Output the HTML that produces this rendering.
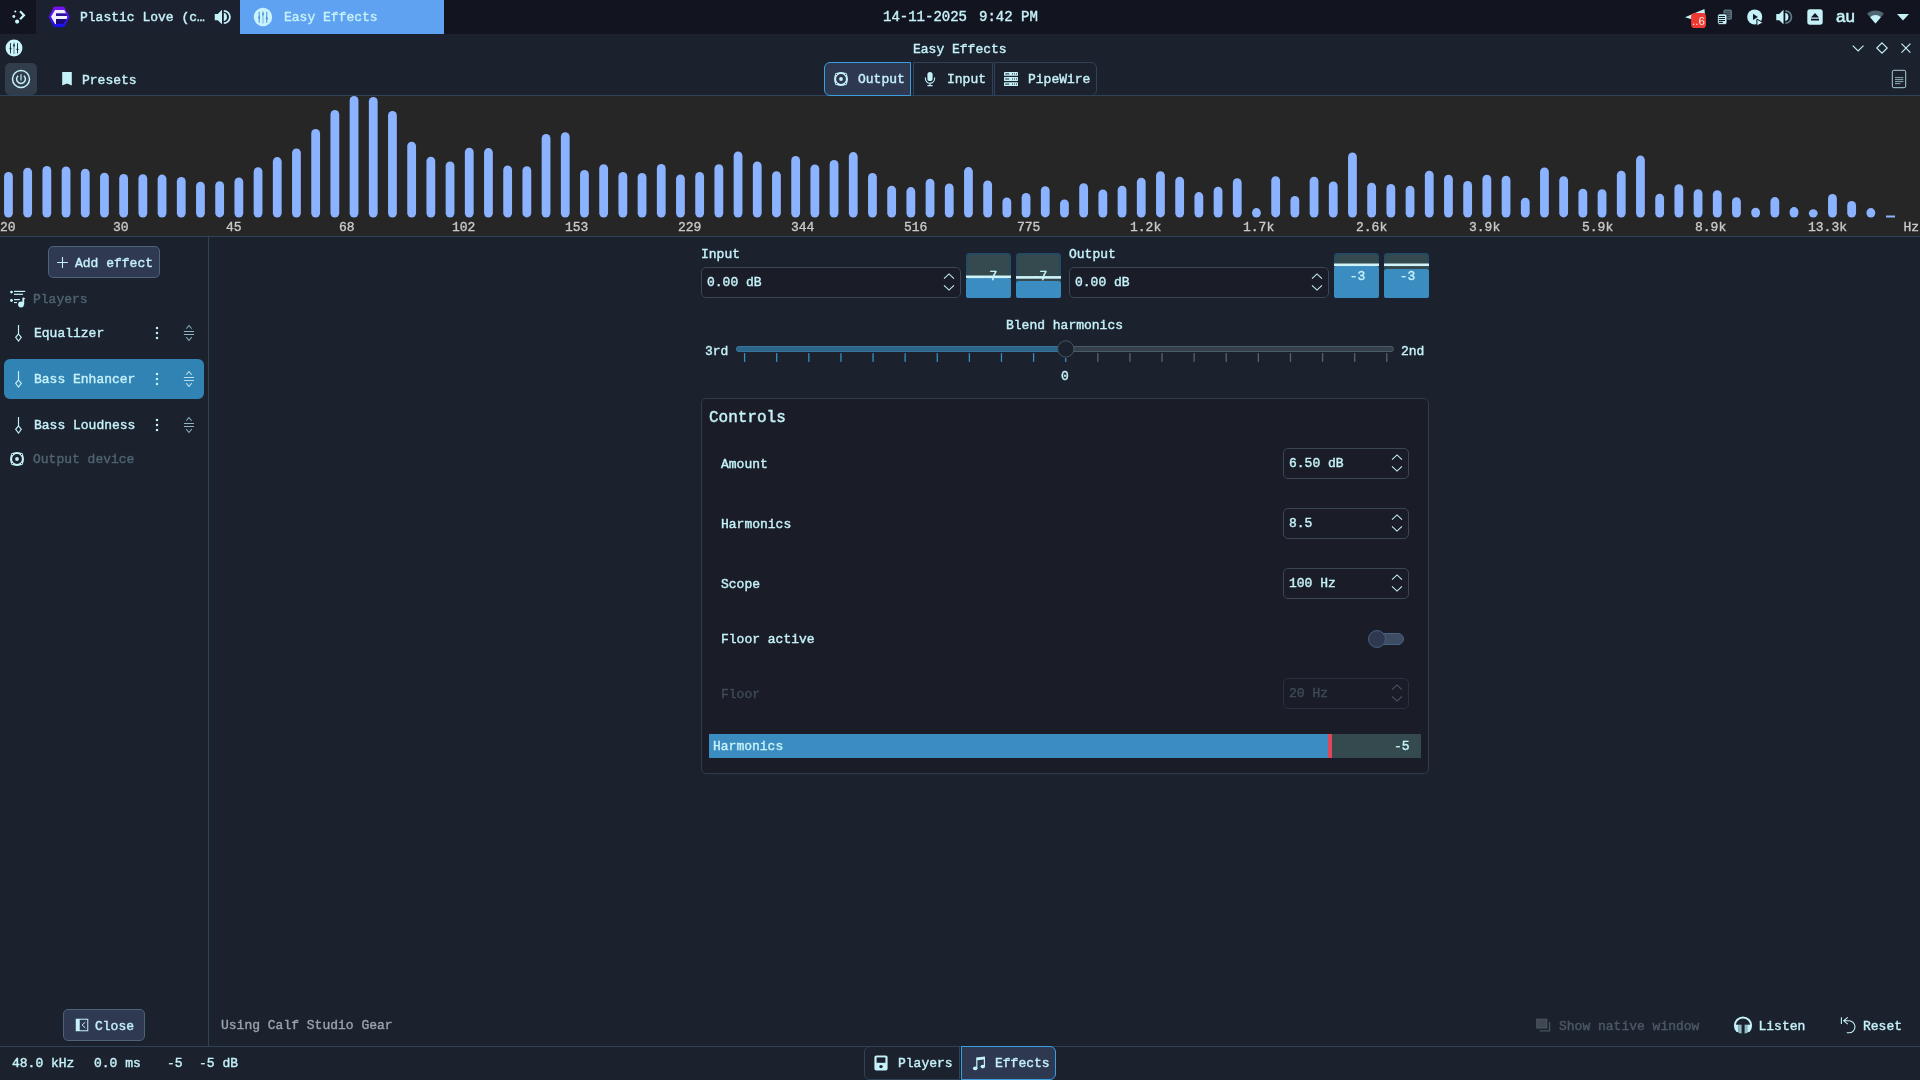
<!DOCTYPE html>
<html lang="en">
<head>
<meta charset="utf-8">
<title>Easy Effects</title>
<style>
*{box-sizing:border-box;margin:0;padding:0}
html,body{width:1920px;height:1080px;overflow:hidden;background:#1b212d}
body{position:relative;font-family:"Liberation Mono","DejaVu Sans Mono",monospace;font-size:13px;line-height:16px;color:#c5f1f9;-webkit-text-stroke:0.4px currentColor;white-space:nowrap}
.abs,.t,.fl,.tk,i,svg{position:absolute}
.t{line-height:16px;height:16px}
.dim{color:#4e6470}
/* top panel */
#panel{left:0;top:0;width:1920px;height:34px;background:#12141f}
#tasks{left:36px;top:0;width:204px;height:34px;background:#1b212e}
#acttab{left:240px;top:0;width:204px;height:34px;background:#60a2f2}
/* lines */
.hl{height:1px;background:#2f4358;left:0;width:1920px}
.vl{width:1px;background:#2f4358}
#spec{left:0;top:96px;width:1920px;height:140px;background:#262626}
.fl{top:220px;font-size:13px;line-height:16px;color:#c9c9c9;-webkit-text-stroke:0.35px #c9c9c9}
.btn{background:#2f3a52;border:1px solid #4c6378;border-radius:5px}
.spin{background:#1a1d28;border:1px solid #3a4754;border-radius:5px}
.tk{top:353px;width:1.4px;height:9px;background:#56646f}
.tk.on{background:#3a8cc4}
.tk.sh{top:358px;height:4px}
</style>
</head>
<body>
<div id="root" class="abs" style="left:0;top:0;width:1920px;height:1080px;will-change:transform;transform:translateZ(0)">
<!-- ===== desktop panel ===== -->
<div id="panel" class="abs"></div>
<div id="tasks" class="abs"></div>
<div id="acttab" class="abs"></div>
<span class="t" style="left:80px;top:10px">Plastic Love (c…</span>
<span class="t" style="left:284px;top:10px">Easy Effects</span>
<span class="t" style="left:883px;top:9px;font-size:14px">14-11-2025</span>
<span class="t" style="left:979px;top:9px;font-size:14px">9:42 PM</span>


<!-- launcher (plasma-like) -->
<svg width="20" height="20" viewBox="9 7 20 20" style="left:9px;top:7px" fill="#c9f5fb">
<circle cx="15.3" cy="11.5" r="1.05"/><circle cx="13.85" cy="16.5" r="1.45"/><circle cx="17.1" cy="21.6" r="2.05"/>
<path d="M19.3 12.1L20.8 10.6L25.5 15.35L20.8 20.1L19.3 18.6L22.4 15.35Z"/>
</svg>
<!-- player app icon (hexagon) -->
<svg width="24" height="24" viewBox="47 5 24 24" style="left:47px;top:5px">
<defs><linearGradient id="hx" x1="0" y1="0" x2="0" y2="1"><stop offset="0" stop-color="#7c12f2"/><stop offset=".55" stop-color="#4a12f2"/><stop offset="1" stop-color="#1612f8"/></linearGradient></defs>
<path d="M54.2 7.1H63.9L69.4 16.9L63.9 26.75H54.2L49 16.9Z" fill="url(#hx)" stroke="url(#hx)" stroke-width=".8" stroke-linejoin="round"/>
<path d="M56 13.2H65.6L67 16.05H56Z" fill="#2a109a"/><path d="M56 18.9H66.6L63.2 23.9H56Z" fill="#1e0a7a"/>
<path d="M51 16.7L55.1 10.1H64.3L66 13.2H56V16.05H67.2L66.8 18.9H56V23.9H55.1Z" fill="#f0eefc"/>
</svg>
<!-- volume in task -->
<svg width="20" height="18" viewBox="213 8 20 18" style="left:213px;top:8px" fill="#c5f1f9">
<path d="M214.75 13.9H217.7L222 9.8V24.2L217.7 20.2H214.75Z"/>
<path d="M223.8 12.85A4.3 4.3 0 0 1 223.8 21.15Z"/>
<path d="M223.8 10.9A6.1 6.1 0 0 1 223.8 23.1" fill="none" stroke="#c5f1f9" stroke-width="1.8"/>
</svg>
<!-- easy effects icon in active tab -->
<svg width="22" height="22" viewBox="252 6 22 22" style="left:252px;top:6px">
<circle cx="263" cy="17" r="9.2" fill="#c9f4fb"/>
<g stroke="#4f8fe0" stroke-width="1"><path d="M259.2 11.8V22.8M266.8 11.8V22.8"/><path d="M263 11.2V23.4" stroke="#7fb4ee" stroke-width="1.1"/></g>
<g fill="#4f8fe0"><path d="M259.2 15.4L260.2 17.6L259.2 19.8L258.2 17.6Z"/><path d="M263 12L264 14.1L263 16.2L262 14.1Z"/><path d="M266.8 16.1L267.8 18.3L266.8 20.5L265.8 18.3Z"/></g>
</svg>
<!-- tray: telegram + badge -->
<svg width="26" height="24" viewBox="1683 6 26 24" style="left:1683px;top:6px">
<path d="M1685 17.2L1704.4 8.9L1704.9 13L1700 22L1694 20Z" fill="#c5f1f9"/>
<rect x="1691.1" y="12.9" width="14.9" height="15.1" rx="3.6" fill="#ee3a32"/>
</svg>
<span class="t" style="left:1692px;top:13px;font-family:'Liberation Sans','DejaVu Sans',sans-serif;font-size:11.5px;color:#ffe9e6;-webkit-text-stroke:0">..6</span>
<!-- tray: clipboard -->
<svg width="16" height="16" viewBox="0 0 16 16" style="left:1717px;top:9px">
<rect x="6.4" y="0.5" width="8.6" height="10.3" rx="1.8" fill="#5a6f7d"/>
<g stroke="#2b3540" stroke-width=".9"><path d="M8 2.8h5.4M8 4.7h5.4M8 6.6h5.4M11 8.5h2.4"/></g>
<rect x=".7" y="4.95" width="9.2" height="10.5" rx="1.8" fill="#c5f1f9" stroke="#12141f" stroke-width=".7"/>
<g stroke="#12141f" stroke-width="1.1"><path d="M1.9 7.5h6.1M1.9 9.5h6.1M1.9 11.5h6.1M1.9 13.4h4"/></g>
</svg>
<!-- tray: media -->
<svg width="19" height="19" viewBox="-0.5 -0.5 19 19" style="left:1746px;top:8px">
<circle cx="8.2" cy="8.4" r="7.5" fill="#c5f1f9"/>
<path d="M6.5 5.3L11.4 8.45L6.5 11.6Z" fill="#12141f"/>
<path d="M10.4 10.6 L16.6 14.2 L10.4 17.4Z" fill="#c5f1f9" stroke="#12141f" stroke-width="1"/>
</svg>
<!-- tray: volume -->
<svg width="21" height="18" viewBox="1774 8 21 18" style="left:1774px;top:8px" fill="#c5f1f9">
<path d="M1776.25 13.9H1779.2L1783.5 9.8V24.2L1779.2 20.2H1776.25Z"/>
<path d="M1785.3 12.85A4.3 4.3 0 0 1 1785.3 21.15Z"/>
<path d="M1785.3 10.9A6.1 6.1 0 0 1 1785.3 23.1" fill="none" stroke="#5d7886" stroke-width="1.8"/>
</svg>
<!-- tray: eject -->
<svg width="16" height="16" viewBox="0 0 16 16" style="left:1807px;top:9px">
<rect x=".3" y=".3" width="15.4" height="15.4" rx="2.6" fill="#c5f1f9"/>
<path d="M8 3.9 L12 8.4 H4Z M4 9.8 H12 V11.6 H4Z" fill="#12141f"/>
</svg>
<span class="t" style="left:1836px;top:7px;font-family:'Liberation Sans','DejaVu Sans',sans-serif;font-size:17px;line-height:20px;height:20px;-webkit-text-stroke:0.55px #c5f1f9">au</span>
<!-- tray: wifi -->
<svg width="19" height="14" viewBox="-0.5 0 19 14" style="left:1866px;top:10px">
<path d="M9 13.4 L0.6 3.8 A12.6 12.6 0 0 1 17.4 3.8Z" fill="#4f6674"/>
<path d="M9 13.4 L3.6 7.2 A8 8 0 0 1 14.4 7.2Z" fill="#c5f1f9"/>
</svg>
<svg width="14" height="8" viewBox="0 0 14 8" style="left:1896px;top:13px"><path d="M1 1 H13 L7 7.4Z" fill="#c5f1f9"/></svg>

<!-- ===== window ===== -->
<span class="t" style="left:913px;top:42px">Easy Effects</span>

<div class="abs hl" style="top:95px"></div>
<!-- window icon -->
<svg width="20" height="20" viewBox="4 38 20 20" style="left:4px;top:38px">
<circle cx="14" cy="48" r="8.45" fill="#c9f4fb"/>
<g stroke="#1b212d" stroke-width=".9"><path d="M10.5 43.2V53.4M17.5 43.2V53.4"/><path d="M14 42.6V54" stroke="#5f7c88" stroke-width="1"/></g>
<g fill="#1b212d"><path d="M10.5 46.6L11.4 48.6L10.5 50.6L9.6 48.6Z"/><path d="M14 43.4L14.9 45.3L14 47.2L13.1 45.3Z"/><path d="M17.5 47.2L18.4 49.2L17.5 51.2L16.6 49.2Z"/></g>
</svg>
<!-- window controls -->
<svg width="14" height="8" viewBox="1851 44 14 8" style="left:1851px;top:44px"><path d="M1852.7 45.7L1858.1 51L1863.5 45.7" fill="none" stroke="#c5f1f9" stroke-width="1.15"/></svg>
<svg width="14" height="14" viewBox="1875 41 14 14" style="left:1875px;top:41px"><path d="M1882 42.8L1887.2 48L1882 53.2L1876.8 48Z" fill="none" stroke="#c5f1f9" stroke-width="1.15"/></svg>
<svg width="12" height="12" viewBox="1900 42 12 12" style="left:1900px;top:42px"><path d="M1901.5 43.6L1910.4 52.6M1910.4 43.6L1901.5 52.6" fill="none" stroke="#c5f1f9" stroke-width="1.15"/></svg>
<!-- power button -->
<div class="abs" style="left:5px;top:63px;width:32px;height:32px;background:#313d4b;border-radius:5px"></div>
<svg width="22" height="22" viewBox="10 68 22 22" style="left:10px;top:68px" fill="none" stroke="#c5f1f9">
<circle cx="21" cy="79" r="8.5" stroke-width="1.5"/>
<path d="M18.1 75.7A4.4 4.4 0 1 0 23.9 75.7" stroke-width="1.5"/><path d="M21 74.2V80.6" stroke-width="1.5" stroke="#9cc7d1"/>
</svg>
<!-- presets -->
<svg width="12" height="16" viewBox="0 0 12 16" style="left:61px;top:71px"><path d="M1.2 1 H10.8 V14.6 L6 12.4 L1.2 14.6Z" fill="#c5f1f9"/></svg>
<span class="t" style="left:82px;top:73px">Presets</span>
<!-- tabs -->
<div class="abs" style="left:824px;top:62px;width:87px;height:34px;background:#2e3850;border:1px solid #3b9ede;border-radius:6px 0 0 6px"></div>
<div class="abs" style="left:913px;top:62px;width:79.5px;height:34px;border:1px solid #30425a"></div>
<div class="abs" style="left:994px;top:62px;width:103px;height:34px;border:1px solid #30425a;border-radius:0 6px 6px 0"></div>
<svg width="16" height="16" viewBox="0 0 16 16" style="left:833px;top:71px">
<rect x="1.8" y="1.8" width="12.4" height="12.4" rx="2.2" fill="#c5f1f9"/><circle cx="8" cy="8" r="7" fill="#c5f1f9"/><circle cx="8" cy="8" r="4.9" fill="#2e3850"/><circle cx="8" cy="8" r="1.9" fill="#c5f1f9"/>
<g fill="#2e3850"><circle cx="3.4" cy="3.4" r=".6"/><circle cx="12.6" cy="3.4" r=".6"/><circle cx="3.4" cy="12.6" r=".6"/><circle cx="12.6" cy="12.6" r=".6"/></g>
</svg>
<span class="t" style="left:858px;top:72px">Output</span>
<svg width="12" height="16" viewBox="0 0 12 16" style="left:924px;top:71px">
<rect x="3.4" y="1" width="5.2" height="9" rx="2.6" fill="#c5f1f9"/>
<path d="M1.4 6.6 V7.6 A4.6 4.6 0 0 0 10.6 7.6 V6.6 M6 12.4 V14.4 M3.4 14.6 H8.6" fill="none" stroke="#c5f1f9" stroke-width="1.1"/>
</svg>
<span class="t" style="left:947px;top:72px">Input</span>
<svg width="16" height="16" viewBox="0 0 16 16" style="left:1003px;top:71px" fill="#c5f1f9">
<rect x="1" y="1" width="14" height="3.8" rx=".6"/><rect x="1" y="6.1" width="14" height="3.8" rx=".6"/><rect x="1" y="11.2" width="14" height="3.8" rx=".6"/>
<g fill="#1b212d"><rect x="2.2" y="2.4" width="4" height="1"/><rect x="2.2" y="7.5" width="4" height="1"/><rect x="2.2" y="12.6" width="4" height="1"/>
<rect x="9" y="2.4" width="1" height="1"/><rect x="11" y="2.4" width="1" height="1"/><rect x="13" y="2.4" width="1" height="1"/>
<rect x="9" y="7.5" width="1" height="1"/><rect x="11" y="7.5" width="1" height="1"/><rect x="13" y="7.5" width="1" height="1"/>
<rect x="9" y="12.6" width="1" height="1"/><rect x="11" y="12.6" width="1" height="1"/><rect x="13" y="12.6" width="1" height="1"/></g>
</svg>
<span class="t" style="left:1028px;top:72px">PipeWire</span>
<!-- menu icon -->
<svg width="16" height="20" viewBox="0 0 16 20" style="left:1891px;top:69px" fill="none" stroke="#a9cfd8">
<rect x="1.3" y="1.3" width="13.4" height="17.4" rx="1.6" stroke-width="1"/>
<path d="M4 8.6h8.4M4 10.6h8.4M4 12.6h8.4M4 14.6h5.4" stroke-width=".8"/>
</svg>

<div id="spec" class="abs"></div>
<svg width="1920" height="140" viewBox="0 96 1920 140" style="left:0;top:96px" fill="#8bb3ff">
<rect x="4.05" y="171.9" width="8.8" height="45.6" rx="4.4"/>
<rect x="23.25" y="167.7" width="8.8" height="49.8" rx="4.4"/>
<rect x="42.45" y="166.0" width="8.8" height="51.5" rx="4.4"/>
<rect x="61.65" y="166.5" width="8.8" height="51.0" rx="4.4"/>
<rect x="80.85" y="168.8" width="8.8" height="48.8" rx="4.4"/>
<rect x="100.05" y="172.7" width="8.8" height="44.8" rx="4.4"/>
<rect x="119.25" y="174.0" width="8.8" height="43.5" rx="4.4"/>
<rect x="138.45" y="174.2" width="8.8" height="43.3" rx="4.4"/>
<rect x="157.65" y="174.6" width="8.8" height="42.9" rx="4.4"/>
<rect x="176.85" y="176.9" width="8.8" height="40.6" rx="4.4"/>
<rect x="196.05" y="181.7" width="8.8" height="35.8" rx="4.4"/>
<rect x="215.25" y="181.2" width="8.8" height="36.2" rx="4.4"/>
<rect x="234.45" y="177.5" width="8.8" height="40.0" rx="4.4"/>
<rect x="253.65" y="167.3" width="8.8" height="50.2" rx="4.4"/>
<rect x="272.85" y="157.1" width="8.8" height="60.4" rx="4.4"/>
<rect x="292.05" y="148.5" width="8.8" height="69.0" rx="4.4"/>
<rect x="311.25" y="129.0" width="8.8" height="88.5" rx="4.4"/>
<rect x="330.45" y="110.0" width="8.8" height="107.5" rx="4.4"/>
<rect x="349.65" y="96.0" width="8.8" height="121.5" rx="4.4"/>
<rect x="368.85" y="96.9" width="8.8" height="120.6" rx="4.4"/>
<rect x="388.05" y="111.0" width="8.8" height="106.5" rx="4.4"/>
<rect x="407.25" y="141.7" width="8.8" height="75.8" rx="4.4"/>
<rect x="426.45" y="156.7" width="8.8" height="60.8" rx="4.4"/>
<rect x="445.65" y="161.5" width="8.8" height="56.0" rx="4.4"/>
<rect x="464.85" y="147.7" width="8.8" height="69.8" rx="4.4"/>
<rect x="484.05" y="148.1" width="8.8" height="69.4" rx="4.4"/>
<rect x="503.25" y="165.4" width="8.8" height="52.1" rx="4.4"/>
<rect x="522.45" y="166.2" width="8.8" height="51.2" rx="4.4"/>
<rect x="541.65" y="134.0" width="8.8" height="83.5" rx="4.4"/>
<rect x="560.85" y="132.3" width="8.8" height="85.2" rx="4.4"/>
<rect x="580.05" y="170.0" width="8.8" height="47.5" rx="4.4"/>
<rect x="599.25" y="164.2" width="8.8" height="53.3" rx="4.4"/>
<rect x="618.45" y="171.9" width="8.8" height="45.6" rx="4.4"/>
<rect x="637.65" y="172.9" width="8.8" height="44.6" rx="4.4"/>
<rect x="656.85" y="164.0" width="8.8" height="53.5" rx="4.4"/>
<rect x="676.05" y="174.4" width="8.8" height="43.1" rx="4.4"/>
<rect x="695.25" y="171.9" width="8.8" height="45.6" rx="4.4"/>
<rect x="714.45" y="164.2" width="8.8" height="53.3" rx="4.4"/>
<rect x="733.65" y="151.5" width="8.8" height="66.0" rx="4.4"/>
<rect x="752.85" y="161.5" width="8.8" height="56.0" rx="4.4"/>
<rect x="772.05" y="171.2" width="8.8" height="46.2" rx="4.4"/>
<rect x="791.25" y="156.0" width="8.8" height="61.5" rx="4.4"/>
<rect x="810.45" y="164.4" width="8.8" height="53.1" rx="4.4"/>
<rect x="829.65" y="160.0" width="8.8" height="57.5" rx="4.4"/>
<rect x="848.85" y="152.1" width="8.8" height="65.4" rx="4.4"/>
<rect x="868.05" y="172.9" width="8.8" height="44.6" rx="4.4"/>
<rect x="887.25" y="185.8" width="8.8" height="31.7" rx="4.4"/>
<rect x="906.45" y="187.1" width="8.8" height="30.4" rx="4.4"/>
<rect x="925.65" y="178.8" width="8.8" height="38.8" rx="4.4"/>
<rect x="944.85" y="183.5" width="8.8" height="34.0" rx="4.4"/>
<rect x="964.05" y="167.1" width="8.8" height="50.4" rx="4.4"/>
<rect x="983.25" y="180.4" width="8.8" height="37.1" rx="4.4"/>
<rect x="1002.45" y="197.5" width="8.8" height="20.0" rx="4.4"/>
<rect x="1021.65" y="192.9" width="8.8" height="24.6" rx="4.4"/>
<rect x="1040.85" y="186.2" width="8.8" height="31.2" rx="4.4"/>
<rect x="1060.05" y="199.4" width="8.8" height="18.1" rx="4.4"/>
<rect x="1079.25" y="183.3" width="8.8" height="34.2" rx="4.4"/>
<rect x="1098.45" y="189.4" width="8.8" height="28.1" rx="4.4"/>
<rect x="1117.65" y="185.8" width="8.8" height="31.7" rx="4.4"/>
<rect x="1136.85" y="177.7" width="8.8" height="39.8" rx="4.4"/>
<rect x="1156.05" y="171.2" width="8.8" height="46.2" rx="4.4"/>
<rect x="1175.25" y="176.7" width="8.8" height="40.8" rx="4.4"/>
<rect x="1194.45" y="192.1" width="8.8" height="25.4" rx="4.4"/>
<rect x="1213.65" y="186.7" width="8.8" height="30.8" rx="4.4"/>
<rect x="1232.85" y="178.3" width="8.8" height="39.2" rx="4.4"/>
<rect x="1252.05" y="208.1" width="8.8" height="9.4" rx="4.4"/>
<rect x="1271.25" y="176.2" width="8.8" height="41.2" rx="4.4"/>
<rect x="1290.45" y="196.0" width="8.8" height="21.5" rx="4.4"/>
<rect x="1309.65" y="176.7" width="8.8" height="40.8" rx="4.4"/>
<rect x="1328.85" y="181.5" width="8.8" height="36.0" rx="4.4"/>
<rect x="1348.05" y="152.5" width="8.8" height="65.0" rx="4.4"/>
<rect x="1367.25" y="182.7" width="8.8" height="34.8" rx="4.4"/>
<rect x="1386.45" y="184.0" width="8.8" height="33.5" rx="4.4"/>
<rect x="1405.65" y="185.8" width="8.8" height="31.7" rx="4.4"/>
<rect x="1424.85" y="170.8" width="8.8" height="46.7" rx="4.4"/>
<rect x="1444.05" y="174.8" width="8.8" height="42.7" rx="4.4"/>
<rect x="1463.25" y="181.0" width="8.8" height="36.5" rx="4.4"/>
<rect x="1482.45" y="174.8" width="8.8" height="42.7" rx="4.4"/>
<rect x="1501.65" y="175.8" width="8.8" height="41.7" rx="4.4"/>
<rect x="1520.85" y="197.7" width="8.8" height="19.8" rx="4.4"/>
<rect x="1540.05" y="167.5" width="8.8" height="50.0" rx="4.4"/>
<rect x="1559.25" y="176.2" width="8.8" height="41.2" rx="4.4"/>
<rect x="1578.45" y="188.8" width="8.8" height="28.8" rx="4.4"/>
<rect x="1597.65" y="189.2" width="8.8" height="28.3" rx="4.4"/>
<rect x="1616.85" y="170.8" width="8.8" height="46.7" rx="4.4"/>
<rect x="1636.05" y="155.6" width="8.8" height="61.9" rx="4.4"/>
<rect x="1655.25" y="193.8" width="8.8" height="23.8" rx="4.4"/>
<rect x="1674.45" y="184.2" width="8.8" height="33.3" rx="4.4"/>
<rect x="1693.65" y="189.2" width="8.8" height="28.3" rx="4.4"/>
<rect x="1712.85" y="190.2" width="8.8" height="27.3" rx="4.4"/>
<rect x="1732.05" y="197.3" width="8.8" height="20.2" rx="4.4"/>
<rect x="1751.25" y="207.7" width="8.8" height="9.8" rx="4.4"/>
<rect x="1770.45" y="197.1" width="8.8" height="20.4" rx="4.4"/>
<rect x="1789.65" y="207.1" width="8.8" height="10.4" rx="4.4"/>
<rect x="1808.85" y="209.2" width="8.8" height="8.3" rx="4.4"/>
<rect x="1828.05" y="194.0" width="8.8" height="23.5" rx="4.4"/>
<rect x="1847.25" y="201.0" width="8.8" height="16.5" rx="4.4"/>
<rect x="1866.45" y="208.1" width="8.8" height="9.4" rx="4.4"/>
<rect x="1886" y="215.5" width="9" height="2"/>
</svg>
<span class="fl" style="left:0px">20</span><span class="fl" style="left:113px">30</span><span class="fl" style="left:226px">45</span><span class="fl" style="left:339px">68</span><span class="fl" style="left:452px">102</span><span class="fl" style="left:565px">153</span><span class="fl" style="left:678px">229</span><span class="fl" style="left:791px">344</span><span class="fl" style="left:904px">516</span><span class="fl" style="left:1017px">775</span><span class="fl" style="left:1130px">1.2k</span><span class="fl" style="left:1243px">1.7k</span><span class="fl" style="left:1356px">2.6k</span><span class="fl" style="left:1469px">3.9k</span><span class="fl" style="left:1582px">5.9k</span><span class="fl" style="left:1695px">8.9k</span><span class="fl" style="left:1808px">13.3k</span><span class="fl" style="right:1px">Hz</span>
<div class="abs hl" style="top:236px"></div>
<div class="abs vl" style="left:208px;top:237px;height:809px"></div>
<div class="abs hl" style="top:1046px"></div>


<!-- ===== sidebar ===== -->
<div class="abs btn" style="left:48px;top:246px;width:112px;height:32px"></div>
<svg width="13" height="13" viewBox="-0.5 -0.5 13 13" style="left:56px;top:256px"><path d="M6 .6V11.4M.6 6H11.4" stroke="#c5f1f9" stroke-width="1.1" fill="none"/></svg>
<span class="t" style="left:75px;top:256px">Add effect</span>
<svg width="18" height="20" viewBox="9 288 18 20" style="left:9px;top:288px" fill="#c5f1f9">
<circle cx="11.5" cy="292.1" r="1.45"/><circle cx="11.5" cy="300.5" r="1.45"/>
<rect x="14" y="290.8" width="11.2" height="1.2"/><rect x="14" y="293.7" width="9" height="1.2"/><rect x="14" y="299" width="5.9" height="1.2"/><rect x="14" y="302" width="3" height="1.1"/>
<circle cx="21" cy="304.5" r="2.9"/><path d="M22.3 304.5V298.2Q22.9 297.2 23.6 297.6L25.3 298.6L24.2 299.4V304.5Z"/>
</svg>
<span class="t dim" style="left:33px;top:292px">Players</span>
<svg width="18" height="20" viewBox="0 0 18 20" style="left:10px;top:323px" fill="none" stroke="#c5f1f9" stroke-width="1.15"><path d="M8.5 1.9V11M8.5 11L11.3 14.3L8.5 18L5.7 14.3Z"/></svg><span class="t" style="left:34px;top:326px">Equalizer</span><svg width="4" height="16" viewBox="0 0 4 16" style="left:155px;top:325px" fill="#c5f1f9"><rect x=".9" y="1.9" width="2.2" height="2.2"/><rect x=".9" y="6.9" width="2.2" height="2.2"/><rect x=".9" y="11.9" width="2.2" height="2.2"/></svg><svg width="12" height="18" viewBox="0 0 12 18" style="left:183px;top:324px" fill="none" stroke="#a9cfd8"><path d="M3.2 4.75L5.9 1.6L8.8 4.75M3.2 13.2L5.9 16.4L8.8 13.2" stroke-width="1.1" stroke="#7fa5b2"/><path d="M.9 7.5h10.1M.9 10.5h10.1" stroke-width="1.05" stroke="#8fb5c2"/></svg>
<div class="abs" style="left:4px;top:359px;width:200px;height:40px;background:#3183b3;border-radius:6px"></div>
<svg width="18" height="20" viewBox="0 0 18 20" style="left:10px;top:369px" fill="none" stroke="#c5f1f9" stroke-width="1.15"><path d="M8.5 1.9V11M8.5 11L11.3 14.3L8.5 18L5.7 14.3Z"/></svg><span class="t" style="left:34px;top:372px">Bass Enhancer</span><svg width="4" height="16" viewBox="0 0 4 16" style="left:155px;top:371px" fill="#c5f1f9"><rect x=".9" y="1.9" width="2.2" height="2.2"/><rect x=".9" y="6.9" width="2.2" height="2.2"/><rect x=".9" y="11.9" width="2.2" height="2.2"/></svg><svg width="12" height="18" viewBox="0 0 12 18" style="left:183px;top:370px" fill="none" stroke="#a9cfd8"><path d="M3.2 4.75L5.9 1.6L8.8 4.75M3.2 13.2L5.9 16.4L8.8 13.2" stroke-width="1.1" stroke="#b4dcea"/><path d="M.9 7.5h10.1M.9 10.5h10.1" stroke-width="1.05" stroke="#b4dcea"/></svg>
<svg width="18" height="20" viewBox="0 0 18 20" style="left:10px;top:415px" fill="none" stroke="#c5f1f9" stroke-width="1.15"><path d="M8.5 1.9V11M8.5 11L11.3 14.3L8.5 18L5.7 14.3Z"/></svg><span class="t" style="left:34px;top:418px">Bass Loudness</span><svg width="4" height="16" viewBox="0 0 4 16" style="left:155px;top:417px" fill="#c5f1f9"><rect x=".9" y="1.9" width="2.2" height="2.2"/><rect x=".9" y="6.9" width="2.2" height="2.2"/><rect x=".9" y="11.9" width="2.2" height="2.2"/></svg><svg width="12" height="18" viewBox="0 0 12 18" style="left:183px;top:416px" fill="none" stroke="#a9cfd8"><path d="M3.2 4.75L5.9 1.6L8.8 4.75M3.2 13.2L5.9 16.4L8.8 13.2" stroke-width="1.1" stroke="#7fa5b2"/><path d="M.9 7.5h10.1M.9 10.5h10.1" stroke-width="1.05" stroke="#8fb5c2"/></svg>
<svg width="16" height="16" viewBox="0 0 16 16" style="left:9px;top:451px">
<rect x="1.8" y="1.8" width="12.4" height="12.4" rx="2.2" fill="#c5f1f9"/><circle cx="8" cy="8" r="7" fill="#c5f1f9"/><circle cx="8" cy="8" r="4.9" fill="#1b212d"/><circle cx="8" cy="8" r="1.9" fill="#c5f1f9"/>
<g fill="#1b212d"><circle cx="3.4" cy="3.4" r=".6"/><circle cx="12.6" cy="3.4" r=".6"/><circle cx="3.4" cy="12.6" r=".6"/><circle cx="12.6" cy="12.6" r=".6"/></g>
</svg>
<span class="t dim" style="left:33px;top:452px">Output device</span>
<div class="abs btn" style="left:63px;top:1009px;width:82px;height:32px"></div>
<svg width="16" height="16" viewBox="74 1017 16 16" style="left:74px;top:1017px"><rect x="75.75" y="1018.75" width="12.5" height="12.5" fill="#c5f1f9"/><rect x="79.75" y="1019.75" width="7.5" height="10.5" fill="#2d3850"/><path d="M85.3 1022.2L82.1 1025L85.3 1027.9" stroke="#c5f1f9" stroke-width="1" fill="none"/></svg>
<span class="t" style="left:95px;top:1019px">Close</span>


<!-- ===== main ===== -->
<span class="t" style="left:701px;top:247px">Input</span>
<span class="t" style="left:1069px;top:247px">Output</span>
<div class="abs spin" style="left:701px;top:267px;width:260px;height:31px;border-color:#3a4754"></div><span class="t" style="left:707px;top:275px;color:#c5f1f9">0.00 dB</span><svg width="12" height="20" viewBox="0 0 12 20" style="left:943px;top:272px" fill="none" stroke="#c5f1f9" stroke-width="1.05"><path d="M1 6.6L6 1.9L11 6.6M1 13.4L6 18.1L11 13.4"/></svg>
<div class="abs spin" style="left:1069px;top:267px;width:260px;height:31px;border-color:#3a4754"></div><span class="t" style="left:1075px;top:275px;color:#c5f1f9">0.00 dB</span><svg width="12" height="20" viewBox="0 0 12 20" style="left:1311px;top:272px" fill="none" stroke="#c5f1f9" stroke-width="1.05"><path d="M1 6.6L6 1.9L11 6.6M1 13.4L6 18.1L11 13.4"/></svg>
<svg width="45" height="45" viewBox="0 253 45 45" style="left:966px;top:253px"><rect x=".75" y="253.75" width="43.5" height="43.5" rx="2.6" fill="#344a4e" stroke="#214a6b" stroke-width="1.5"/><rect x="0" y="278.0" width="45" height="20" rx="2.6" fill="#3b8cc0"/><rect x="0" y="275.5" width="45" height="2.6" fill="#d0f4fa"/></svg><span class="t" style="left:967px;width:45px;top:269px;text-align:center">-7</span>
<svg width="45" height="45" viewBox="0 253 45 45" style="left:1016px;top:253px"><rect x=".75" y="253.75" width="43.5" height="43.5" rx="2.6" fill="#344a4e" stroke="#214a6b" stroke-width="1.5"/><rect x="0" y="281.0" width="45" height="17" rx="2.6" fill="#3b8cc0"/><rect x="0" y="276.1" width="45" height="2.6" fill="#d0f4fa"/></svg><span class="t" style="left:1017px;width:45px;top:269px;text-align:center">-7</span>
<svg width="45" height="45" viewBox="0 253 45 45" style="left:1334px;top:253px"><rect x=".75" y="253.75" width="43.5" height="43.5" rx="2.6" fill="#344a4e" stroke="#214a6b" stroke-width="1.5"/><rect x="0" y="266.0" width="45" height="32" rx="2.6" fill="#3b8cc0"/><rect x="0" y="263.5" width="45" height="2.55" fill="#d0f4fa"/></svg><span class="t" style="left:1335px;width:45px;top:269px;text-align:center">-3</span>
<svg width="45" height="45" viewBox="0 253 45 45" style="left:1384px;top:253px"><rect x=".75" y="253.75" width="43.5" height="43.5" rx="2.6" fill="#344a4e" stroke="#214a6b" stroke-width="1.5"/><rect x="0" y="268.9" width="45" height="29.1" rx="2.6" fill="#3b8cc0"/><rect x="0" y="263.5" width="45" height="2.55" fill="#d0f4fa"/></svg><span class="t" style="left:1385px;width:45px;top:269px;text-align:center">-3</span>

<span class="t" style="left:1006px;top:318px">Blend harmonics</span>
<span class="t" style="left:705px;top:344px">3rd</span>
<span class="t" style="left:1401px;top:344px">2nd</span>
<svg width="680" height="22" viewBox="726 338 680 22" style="left:726px;top:338px">
<rect x="736.5" y="346.5" width="657" height="5" rx="2.5" fill="#343f4b" stroke="#4a5c69"/>
<rect x="736.5" y="346.5" width="330" height="5" rx="2.5" fill="#2d6688" stroke="#35749a"/>
<circle cx="1065.8" cy="348.9" r="8.15" fill="#1b212d" stroke="#435766"/>
</svg>
<span class="t" style="left:1061px;top:369px">0</span>
<!-- controls panel -->
<div class="abs" style="left:701px;top:398px;width:728px;height:376px;background:#1a1d28;border:1px solid #2f3d4a;border-radius:5px"></div>
<span class="t" style="left:709px;top:408px;font-size:16px;line-height:20px;height:20px;-webkit-text-stroke:0.45px #c5f1f9">Controls</span>
<span class="t" style="left:721px;top:457px">Amount</span>
<span class="t" style="left:721px;top:517px">Harmonics</span>
<span class="t" style="left:721px;top:577px">Scope</span>
<span class="t" style="left:721px;top:632px">Floor active</span>
<span class="t" style="left:721px;top:687px;color:#3e4b57">Floor</span>
<div class="abs spin" style="left:1283px;top:448px;width:126px;height:31px;border-color:#3a4754"></div><span class="t" style="left:1289px;top:456px;color:#c5f1f9">6.50 dB</span><svg width="12" height="20" viewBox="0 0 12 20" style="left:1391px;top:453px" fill="none" stroke="#c5f1f9" stroke-width="1.05"><path d="M1 6.6L6 1.9L11 6.6M1 13.4L6 18.1L11 13.4"/></svg>
<div class="abs spin" style="left:1283px;top:508px;width:126px;height:31px;border-color:#3a4754"></div><span class="t" style="left:1289px;top:516px;color:#c5f1f9">8.5</span><svg width="12" height="20" viewBox="0 0 12 20" style="left:1391px;top:513px" fill="none" stroke="#c5f1f9" stroke-width="1.05"><path d="M1 6.6L6 1.9L11 6.6M1 13.4L6 18.1L11 13.4"/></svg>
<div class="abs spin" style="left:1283px;top:568px;width:126px;height:31px;border-color:#3a4754"></div><span class="t" style="left:1289px;top:576px;color:#c5f1f9">100 Hz</span><svg width="12" height="20" viewBox="0 0 12 20" style="left:1391px;top:573px" fill="none" stroke="#c5f1f9" stroke-width="1.05"><path d="M1 6.6L6 1.9L11 6.6M1 13.4L6 18.1L11 13.4"/></svg>
<div class="abs spin" style="left:1283px;top:678px;width:126px;height:31px;border-color:#28313d"></div><span class="t" style="left:1289px;top:686px;color:#3e4b57">20 Hz</span><svg width="12" height="20" viewBox="0 0 12 20" style="left:1391px;top:683px" fill="none" stroke="#4a5763" stroke-width="1.05"><path d="M1 6.6L6 1.9L11 6.6M1 13.4L6 18.1L11 13.4"/></svg>

<div class="abs" style="left:1372px;top:633px;width:32px;height:12px;border-radius:6px;background:#3d4c62;border:1px solid #48627f"></div>
<div class="abs" style="left:1368px;top:630px;width:18px;height:18px;border-radius:9px;background:#2e3950;border:1px solid #45607e"></div>
<div class="abs" style="left:709px;top:734px;width:712px;height:24px;background:#344a4e"></div>
<div class="abs" style="left:709px;top:734px;width:620px;height:24px;background:#3b8cc0"></div>
<div class="abs" style="left:1328px;top:734px;width:4px;height:24px;background:#e0475a"></div>
<span class="t" style="left:713px;top:739px">Harmonics</span>
<span class="t" style="left:1394px;top:739px">-5</span>
<!-- footer of main -->
<span class="t" style="left:221px;top:1018px;color:#98a2ab">Using Calf Studio Gear</span>
<svg width="16" height="15" viewBox="0 -0.5 16 15" style="left:1536px;top:1018px" fill="none" stroke="#48545f" stroke-width="1.3"><rect x=".8" y=".8" width="10" height="8.6" fill="#3f4853"/><path d="M13.6 3.4V12.4H3.6"/></svg>
<span class="t" style="left:1559px;top:1019px;color:#4c5965;-webkit-text-stroke:0.4px #4c5965">Show native window</span>
<svg width="22" height="22" viewBox="1732 1014 22 22" style="left:1732px;top:1014px">
<defs><clipPath id="hp"><circle cx="1743" cy="1024.7" r="9.1"/></clipPath></defs>
<path d="M1737.2 1031.2A8.1 8.1 0 1 1 1748.8 1031.2" fill="none" stroke="#c5f1f9" stroke-width="2"/>
<g clip-path="url(#hp)"><rect x="1735.4" y="1024.7" width="3.2" height="10" fill="#c5f1f9"/><rect x="1738.6" y="1024.7" width="3" height="10" fill="#8fb8c2"/><rect x="1744.6" y="1024.7" width="3" height="10" fill="#8fb8c2"/><rect x="1747.4" y="1024.7" width="3.2" height="10" fill="#c5f1f9"/></g>
</svg>
<span class="t" style="left:1758.5px;top:1019px">Listen</span>
<svg width="18" height="20" viewBox="1839 1015 18 20" style="left:1839px;top:1015px" fill="none" stroke="#c5f1f9" stroke-width="1.1"><path d="M1841.4 1017.2V1024.1M1847.8 1017.4L1843.7 1020.8L1847.8 1024.2M1843.7 1020.8H1849A6 6 0 0 1 1849 1032.8H1846.8"/></svg>
<span class="t" style="left:1863px;top:1019px">Reset</span>
<!-- status bar -->
<span class="t" style="left:12px;top:1056px">48.0 kHz</span>
<span class="t" style="left:94px;top:1056px">0.0 ms</span>
<span class="t" style="left:167px;top:1056px">-5</span>
<span class="t" style="left:199px;top:1056px">-5 dB</span>
<div class="abs" style="left:864px;top:1046px;width:95.5px;height:34px;border:1px solid #30425a;border-radius:6px 0 0 6px"></div>
<div class="abs" style="left:961px;top:1046px;width:95px;height:34px;background:#2e3850;border:1px solid #3b9ede;border-radius:0 6px 6px 0"></div>
<svg width="14" height="16" viewBox="0 0 14 16" style="left:874px;top:1055px"><rect x=".4" y=".4" width="13.2" height="15.2" rx="2" fill="#c5f1f9"/><rect x="2.6" y="2.4" width="8.8" height="5.4" fill="#1b212d"/><circle cx="7" cy="11.6" r="1.7" fill="#1b212d"/></svg>
<span class="t" style="left:898px;top:1056px">Players</span>
<svg width="14" height="15" viewBox="0 0 14 15" style="left:972px;top:1056px" fill="#c5f1f9"><path d="M4.2 1.6L13 .4V10.6H11.8V3.4L5.4 4.3V12.4H4.2Z"/><ellipse cx="3.2" cy="12.4" rx="2.3" ry="1.8"/><ellipse cx="10.8" cy="10.6" rx="2.3" ry="1.8"/></svg>
<span class="t" style="left:995px;top:1056px">Effects</span>

<svg width="680" height="12" viewBox="726 352 680 12" style="left:726px;top:352px"><rect x="743.95" y="353.1" width="1.3" height="8.8" fill="#3a8cc4"/><rect x="776.06" y="353.1" width="1.3" height="8.8" fill="#3a8cc4"/><rect x="808.17" y="353.1" width="1.3" height="8.8" fill="#3a8cc4"/><rect x="840.28" y="353.1" width="1.3" height="8.8" fill="#3a8cc4"/><rect x="872.39" y="353.1" width="1.3" height="8.8" fill="#3a8cc4"/><rect x="904.50" y="353.1" width="1.3" height="8.8" fill="#3a8cc4"/><rect x="936.61" y="353.1" width="1.3" height="8.8" fill="#3a8cc4"/><rect x="968.72" y="353.1" width="1.3" height="8.8" fill="#3a8cc4"/><rect x="1000.83" y="353.1" width="1.3" height="8.8" fill="#3a8cc4"/><rect x="1032.94" y="353.1" width="1.3" height="8.8" fill="#3a8cc4"/><rect x="1065.05" y="358" width="1.3" height="4" fill="#3a8cc4"/><rect x="1097.16" y="353.1" width="1.3" height="8.8" fill="#56646f"/><rect x="1129.27" y="353.1" width="1.3" height="8.8" fill="#56646f"/><rect x="1161.38" y="353.1" width="1.3" height="8.8" fill="#56646f"/><rect x="1193.49" y="353.1" width="1.3" height="8.8" fill="#56646f"/><rect x="1225.60" y="353.1" width="1.3" height="8.8" fill="#56646f"/><rect x="1257.71" y="353.1" width="1.3" height="8.8" fill="#56646f"/><rect x="1289.82" y="353.1" width="1.3" height="8.8" fill="#56646f"/><rect x="1321.93" y="353.1" width="1.3" height="8.8" fill="#56646f"/><rect x="1354.04" y="353.1" width="1.3" height="8.8" fill="#56646f"/><rect x="1386.15" y="353.1" width="1.3" height="8.8" fill="#56646f"/></svg>
</div>
</body>
</html>
